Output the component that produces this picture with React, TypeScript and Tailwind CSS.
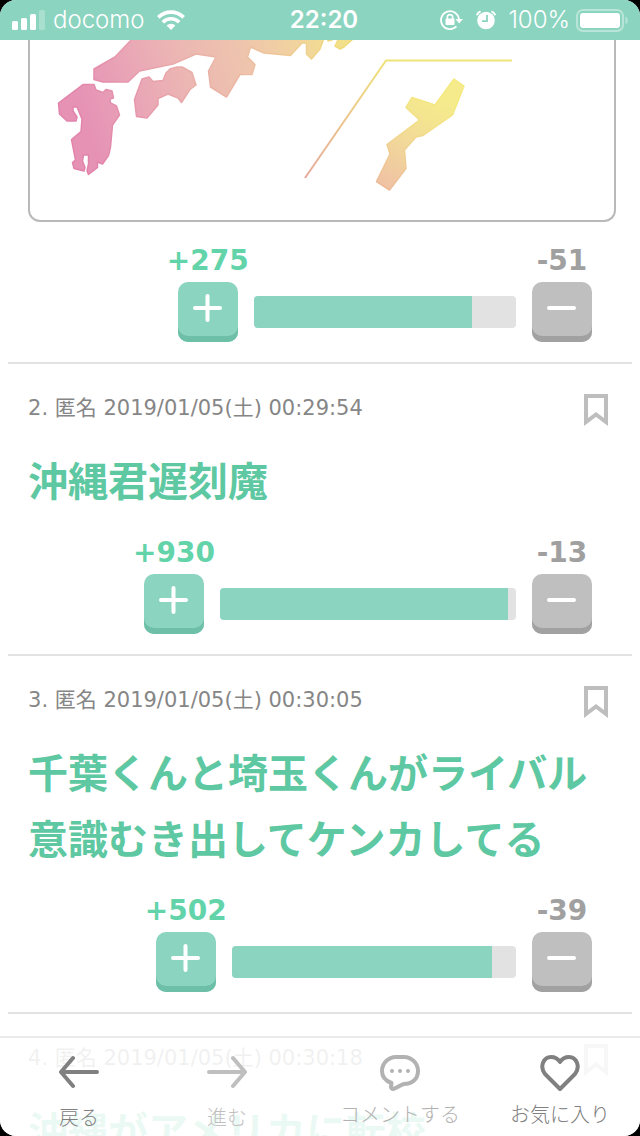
import { clsx } from 'clsx';
import type { ReactNode } from 'react';

type Vote = {
  plus: number;
  minus: number;
  barWidth: number;
  fill: number;
};

type Comment = {
  id: number;
  date: string;
  body: string;
  vote: Vote;
};

const firstVote: Vote = { plus: 275, minus: 51, barWidth: 46.5, fill: 83.2 };

const comments: Comment[] = [
  { id: 2, date: '2019/01/05(土) 00:29:54', body: '沖縄君遅刻魔', vote: { plus: 930, minus: 13, barWidth: 52.5, fill: 97.3 } },
  { id: 3, date: '2019/01/05(土) 00:30:05', body: '千葉くんと埼玉くんがライバル意識むき出してケンカしてる', vote: { plus: 502, minus: 39, barWidth: 50.4, fill: 91.6 } },
  { id: 4, date: '2019/01/05(土) 00:30:18', body: '沖縄がアメリカに転校', vote: { plus: 480, minus: 20, barWidth: 50, fill: 95 } },
];

function StatusBar() {
  return (
    <header className="grid h-10 shrink-0 grid-cols-[1fr_auto_1fr] items-center bg-[#8bd4bf] pr-1 pl-3 font-['Inter',sans-serif] text-2xl text-white">
      <div className="flex items-center gap-2">
        <svg className="h-5 w-[33px]" viewBox="0 0 33 20" fill="currentColor" aria-hidden="true">
          <rect x="0" y="11" width="6" height="9" rx="1.5" />
          <rect x="9" y="8" width="6" height="12" rx="1.5" />
          <rect x="18" y="4" width="6" height="16" rx="1.5" />
          <rect x="27" y="0" width="6" height="20" rx="1.5" opacity=".25" />
        </svg>
        <span className="font-light">docomo</span>
        <svg className="ml-1 h-5 w-7" viewBox="0 0 28 20" aria-hidden="true">
          <g fill="none" stroke="currentColor" strokeWidth="3.6">
            <path d="M1.3 7.4a18 18 0 0 1 25.4 0" />
            <path d="M5.8 12.2a11.6 11.6 0 0 1 16.4 0" />
          </g>
          <path fill="currentColor" d="M14 20l-4.4-4.5a6.4 6.4 0 0 1 8.8 0z" />
        </svg>
      </div>
      <span className="font-semibold">22:20</span>
      <div className="mr-2 flex items-center justify-end">
        <svg className="mr-3 h-5 w-6" viewBox="0 0 24 20" aria-hidden="true">
          <path fill="none" stroke="currentColor" strokeWidth="1.8" d="M16.500 16.4A9 9 0 1 1 19 9.500" />
          <path fill="currentColor" d="M15.500 9H23l-3.800 4.600z" />
          <rect x="5.500" y="8.500" width="9" height="6.500" rx="1" fill="currentColor" />
          <path fill="none" stroke="currentColor" strokeWidth="1.600" d="M7.300 9V7.300a2.700 2.700 0 0 1 5.400 0V9" />
        </svg>
        <svg className="mr-3 h-5 w-5" viewBox="0 0 20 20" aria-hidden="true">
          <circle cx="10" cy="10.500" r="8.800" fill="currentColor" />
          <path d="M11 5v6.200H6" fill="none" stroke="#8bd4bf" strokeWidth="1.800" />
          <path d="M.8 5.200A6 6 0 0 1 4.600 1.400M19.200 5.200a6 6 0 0 0-3.800-3.800" fill="none" stroke="currentColor" strokeWidth="2" />
        </svg>
        <span className="mr-1.5 font-light">100%</span>
        <svg className="h-6 w-[52px]" viewBox="0 0 52 24" fill="currentColor" aria-hidden="true">
          <rect x="1" y="2" width="46" height="21" rx="6" fill="none" stroke="currentColor" strokeWidth="2" opacity=".4" />
          <rect x="4" y="5" width="40" height="15" rx="3" />
          <path d="M49.500 8.500c3 1.500 3 6.500 0 8z" opacity=".4" />
        </svg>
      </div>
    </header>
  );
}

function JapanMap() {
  return (
    <svg className="block w-full" viewBox="30 40 584 180" role="img" aria-label="日本地図" strokeLinejoin="round">
      <defs>
        <linearGradient id="mainland" gradientUnits="userSpaceOnUse" x1="85" y1="120" x2="335" y2="40">
          <stop offset="0" stopColor="#e283ab" />
          <stop offset=".2" stopColor="#e697ac" />
          <stop offset=".4" stopColor="#e9aba9" />
          <stop offset=".65" stopColor="#ecbca2" />
          <stop offset=".85" stopColor="#efcd92" />
          <stop offset="1" stopColor="#f0db7c" />
        </linearGradient>
        <linearGradient id="island" gradientUnits="userSpaceOnUse" x1="390" y1="190" x2="440" y2="95">
          <stop offset="0" stopColor="#edbb9a" />
          <stop offset=".4" stopColor="#f0d190" />
          <stop offset=".75" stopColor="#f3e284" />
          <stop offset="1" stopColor="#f4e97f" />
        </linearGradient>
        <linearGradient id="divider" gradientUnits="userSpaceOnUse" x1="305" y1="178" x2="386" y2="60">
          <stop offset="0" stopColor="#e9a99c" />
          <stop offset=".6" stopColor="#eccb88" />
          <stop offset="1" stopColor="#efe377" />
        </linearGradient>
      </defs>
      <g fill="url(#mainland)" fillOpacity=".88" stroke="url(#mainland)" strokeWidth="1.500">
        <path d="M133 38L115 57L94 69V79.500L103 82H128L139.500 71L173 64L196 54L216 57L208.500 71L210.500 87L226.500 97L240 74.500H252L255 64.500L247.500 57L250.500 47L264 53L290.500 55.500L302 43H306.500V54L311.500 59L320 49L324 38Z" />
        <path d="M328 38V41L332 40V38ZM339 38L335 46L340 49L344 47L354 38Z" />
        <path d="M142 79L149 77L153 81.500L163 80.500L166 73L170 69L177 67L182 67L192 72.500L196 85L190 89.500L181.500 102.500L178 98L168 94L158 98.500V105L147 118L136.500 116.500L134.500 99.500Z" />
        <path d="M83 84.500H94L96 90L103 92.500L106 89.500L112 91L113.500 98L110 99L110.500 103L116.500 106L119.500 115L112.500 125L110.500 147L108.500 155.500L102.500 164L97.500 162V167.500L88.500 174.500L87 171L88.500 164V155H83.500L82.500 161L85 167.500L84 171L74 168.500L72.500 162.500L75.500 160L71.500 139.500L81 131.500L82 119L77 107H73V111L77 117L76 121H67L59.500 114L58.500 103Z" />
      </g>
      <path fill="url(#island)" fillOpacity=".9" stroke="url(#island)" strokeWidth="1.500" d="M454 79L464 86L452.500 115L423 135.500L416 137L404.500 150L406 168.500L389.500 190L376.500 181.500L390 154L387 144.500L419.500 120L406 107.500L412 97.500L435 105Z" />
      <path fill="none" stroke="url(#divider)" strokeWidth="2" d="M305 178L386 60.500H512" />
    </svg>
  );
}

function VoteButton({ kind, count }: { kind: 'plus' | 'minus'; count: number }) {
  const isPlus = kind === 'plus';
  return (
    <div className="flex w-[60px] shrink-0 flex-col items-center">
      <span className={clsx("mb-1.5 font-['DejaVu_Sans',sans-serif] text-[28px] leading-[30px] font-bold", isPlus ? 'text-[#63d4aa]' : 'text-[#a0a0a0]')}>
        {isPlus ? '+' : '-'}
        {count}
      </span>
      <button
        type="button"
        aria-label={isPlus ? 'プラス' : 'マイナス'}
        className={clsx(
          'flex h-[60px] w-full items-center justify-center rounded-[10px] pb-2 text-white',
          isPlus ? 'bg-[#8bd4bf] shadow-[inset_0_-6px_0_#6dbfa7]' : 'bg-[#bfbfbf] shadow-[inset_0_-6px_0_#a1a1a1]'
        )}
      >
        <svg className="size-8" viewBox="0 0 32 32" fill="none" stroke="currentColor" strokeWidth="4" strokeLinecap="round" aria-hidden="true">
          <path d="M3 16h25" />
          {isPlus && <path d="M15.500 4v24" />}
        </svg>
      </button>
    </div>
  );
}

function VoteRow({ vote }: { vote: Vote }) {
  return (
    <div className="mt-6 mr-5 flex items-end justify-end gap-4">
      <VoteButton kind="plus" count={vote.plus} />
      <div className="mb-[14px] h-8 overflow-hidden rounded bg-[#e2e2e2]" style={{ width: `${vote.barWidth}%` }}>
        <div className="h-full bg-[#8bd4bf]" style={{ width: `${vote.fill}%` }} />
      </div>
      <VoteButton kind="minus" count={vote.minus} />
    </div>
  );
}

function Post({ comment }: { comment: Comment }) {
  return (
    <article className="border-b-2 border-[#e2e2e2] px-5 pt-7 pb-5">
      <div className="flex h-8 items-center justify-between">
        <p className="font-['DejaVu_Sans','Noto_Sans_CJK_JP',sans-serif] text-[21px] leading-7 text-[#868686]">
          {comment.id}. 匿名 {comment.date}
        </p>
        <button type="button" aria-label="ブックマーク" className="mr-1 text-[#bebebe]">
          <svg className="mt-1 h-8 w-6" viewBox="0 0 24 32" fill="none" stroke="currentColor" strokeWidth="4" aria-hidden="true">
            <path d="M2 2h20v26l-10-7.500L2 28z" />
          </svg>
        </button>
      </div>
      <h2 className="mt-[22px] pb-0.5 text-[40px] leading-[66px] font-bold text-[#5dc8a1]">{comment.body}</h2>
      <VoteRow vote={comment.vote} />
    </article>
  );
}

function NavItem({ label, className, children }: { label: string; className: string; children: ReactNode }) {
  return (
    <button type="button" className={clsx('flex flex-col items-center text-xl leading-7 font-light', className)}>
      <svg className="h-10 w-10" viewBox="0 0 40 40" fill="none" stroke="currentColor" strokeWidth="4" strokeLinecap="round" strokeLinejoin="round" aria-hidden="true">
        {children}
      </svg>
      {label}
    </button>
  );
}

function BottomNav() {
  return (
    <nav className="absolute inset-x-0 bottom-0 grid h-[100px] grid-cols-4 border-t-2 border-[#ebebeb] bg-white/88">
      <NavItem label="戻る" className="gap-[11px] pt-[14px] pr-0.5 text-[#808080]">
        <path d="M38 20H2M14 6L2 20l12 14" />
      </NavItem>
      <NavItem label="進む" className="gap-[11px] pt-[14px] pr-[26px] text-[#bfbfbf]">
        <path d="M2 20h36M26 6l12 14-12 14" />
      </NavItem>
      <NavItem label="コメントする" className="gap-2 pt-[14px] text-[#b2b2b2]">
        <path d="M17 5h7a14 14 0 0 1 14 14c0 8-6 13-14 13-4 1-7 4-11 5-1 0-2-1-2-2l.5-4C6 29 2 25 2 19A14 14 0 0 1 16 5z" />
        <path d="M12 19h0M20 19h0M28 19h0" />
      </NavItem>
      <NavItem label="お気に入り" className="gap-2 pt-[14px] text-[#808080]">
        <path d="M20 37L5 22c-6-8-1-17 6-17 4 0 7 2 9 5 2-3 5-5 9-5 7 0 12 9 6 17z" />
      </NavItem>
    </nav>
  );
}

export default function App() {
  return (
    <div className="h-screen bg-black">
      <div className="relative flex h-full flex-col overflow-hidden rounded-2xl bg-white font-['Noto_Sans_CJK_JP',sans-serif]">
        <StatusBar />
        <main className="min-h-0 flex-1 overflow-hidden px-2">
          <article className="border-b-2 border-[#e2e2e2] px-5 pb-5">
            <div className="-mr-1 overflow-hidden rounded-b-xl border-2 border-t-0 border-[#b9b9b9]">
              <JapanMap />
            </div>
            <VoteRow vote={firstVote} />
          </article>
          {comments.map((comment) => (
            <Post key={comment.id} comment={comment} />
          ))}
        </main>
        <BottomNav />
      </div>
    </div>
  );
}
